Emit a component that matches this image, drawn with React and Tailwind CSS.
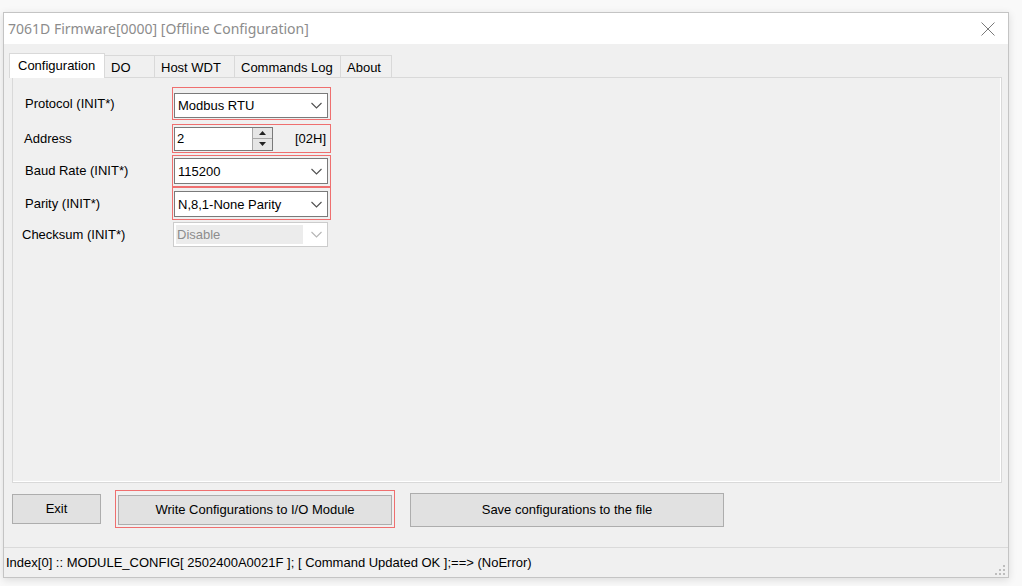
import React from "react";

const Chevron = ({ color = "#505050" }) => (
  <svg width="11" height="7" viewBox="0 0 11 7" fill="none">
    <polyline points="0.5,1 5.5,6 10.5,1" stroke={color} strokeWidth="1.1" />
  </svg>
);

// red highlight drawn round the edited settings
const Framed = ({ className, children }) => (
  <div className={`border border-[#ef6f6f] ${className}`}>{children}</div>
);

const ComboBox = ({ value, className = "h-[25px]" }) => (
  <div className={`flex items-center justify-between bg-white border border-[#7a7a7a] pl-[3px] pr-[5px] ${className}`}>
    <span className="text-[13px] leading-none text-black">{value}</span>
    <Chevron />
  </div>
);

const Spinner = () => (
  <div className="flex flex-col w-[20px] h-full border-l border-[#a8a8a8] bg-[#e6e6e6]">
    <div className="flex-1 flex items-center justify-center border-b border-[#a8a8a8]">
      <svg width="7" height="4" viewBox="0 0 7 4">
        <polygon points="0,4 3.5,0 7,4" fill="#222" />
      </svg>
    </div>
    <div className="flex-1 flex items-center justify-center">
      <svg width="7" height="4" viewBox="0 0 7 4">
        <polygon points="0,0 3.5,4 7,0" fill="#222" />
      </svg>
    </div>
  </div>
);

const tabs = [
  { name: "Configuration", w: "w-[96px]", active: true },
  { name: "DO", w: "w-[50px]" },
  { name: "Host WDT", w: "w-[80px]" },
  { name: "Commands Log", w: "w-[106px]" },
  { name: "About", w: "w-[51px]" },
];

const Button = ({ children, className }) => (
  <div className={`flex items-center justify-center bg-[#e1e1e1] border border-[#adadad] text-[13px] text-black ${className}`}>
    {children}
  </div>
);

export default function App() {
  return (
    <div className="w-[1022px] h-[586px] bg-[#f9f9f9] pl-[3px] pt-[12px] font-['Liberation_Sans',Arial,sans-serif] overflow-hidden">
      <div className="w-[1006px] h-[566px] flex flex-col border border-[#c4c4c4] shadow-[0_2px_8px_rgba(0,0,0,0.12)]">
        {/* title bar */}
        <div className="h-[31px] shrink-0 bg-white flex items-center justify-between pl-[4px] pr-[13px]">
          <span className="font-['Noto_Sans',sans-serif] text-[14px] text-[#8c8c8c]">
            7061D Firmware[0000] [Offline Configuration]
          </span>
          <svg width="14" height="14" viewBox="0 0 14 14">
            <path d="M0.5 0.5 L13.5 13.5 M13.5 0.5 L0.5 13.5" stroke="#7a7a7a" strokeWidth="1" />
          </svg>
        </div>

        <div className="flex-1 flex flex-col bg-[#f0f0f0]">
          {/* tab strip */}
          <div className="flex items-end h-[25px] mt-[8px] ml-[5px]">
            {tabs.map((t) =>
              t.active ? (
                <div
                  key={t.name}
                  className={`${t.w} h-[25px] bg-white border border-b-0 border-[#d9d9d9] pl-[8px] pt-[2px] text-[13px] text-black relative z-10 -mb-px`}
                >
                  {t.name}
                </div>
              ) : (
                <div
                  key={t.name}
                  className={`${t.w} h-[22px] bg-[#f0f0f0] border border-l-0 border-b-0 border-[#d9d9d9] pl-[6px] pt-[2px] text-[13px] text-black`}
                >
                  {t.name}
                </div>
              )
            )}
          </div>

          {/* tab page */}
          <div className="ml-[8px] w-[990px] h-[406px] border border-[#d9d9d9] shadow-[inset_-1px_-1px_0_#ffffff] pl-[12px] pt-[9px]">
            <div className="flex items-center h-[33px]">
              <span className="w-[147px] text-[13px] text-black">Protocol (INIT*)</span>
              <Framed className="w-[159px] h-[33px] px-[1px] pt-[5px] pr-[2px]">
                <ComboBox value="Modbus RTU" />
              </Framed>
            </div>

            <div className="flex items-center h-[29px] mt-[4px]">
              <span className="w-[147px] -ml-[1px] text-[13px] text-black">Address</span>
              <Framed className="w-[159px] h-[29px] flex items-center pl-[1px] pr-[4px] ml-[1px]">
                <div className="flex items-stretch w-[99px] h-[24px] bg-white border border-[#7a7a7a]">
                  <span className="flex-1 pl-[2px] text-[13px] leading-[22px] text-black">2</span>
                  <Spinner />
                </div>
                <span className="ml-auto text-[13px] text-black">[02H]</span>
              </Framed>
            </div>

            <div className="flex items-center h-[32px] mt-[2px]">
              <span className="w-[147px] text-[13px] text-black">Baud Rate (INIT*)</span>
              <Framed className="w-[159px] h-[32px] px-[1px] pt-[2px] pr-[2px]">
                <ComboBox value="115200" className="h-[26px]" />
              </Framed>
            </div>

            <div className="flex items-center h-[33px]">
              <span className="w-[147px] text-[13px] text-black">Parity (INIT*)</span>
              <Framed className="w-[159px] h-[33px] px-[1px] pt-[3px] pr-[2px]">
                <ComboBox value="N,8,1-None Parity" className="h-[26px]" />
              </Framed>
            </div>

            <div className="flex items-center h-[25px] mt-[2px]">
              <span className="w-[148px] -ml-[3px] mr-[3px] text-[13px] text-black">Checksum (INIT*)</span>
              <div className="w-[155px] h-[25px] flex items-center justify-between bg-white border border-[#cccccc] p-[2px] pr-[5px]">
                <span className="w-[127px] h-full bg-[#ececec] pl-[1px] text-[13px] leading-[19px] text-[#8d8d8d]">
                  Disable
                </span>
                <Chevron color="#b5b5b5" />
              </div>
            </div>
          </div>

          {/* buttons */}
          <div className="flex items-center h-[44px] mt-[4px] pl-[8px]">
            <Button className="w-[89px] h-[30px]">Exit</Button>
            <Framed className="ml-[14px] w-[280px] h-[38px] px-[2px] pt-[4px] pb-[2px]">
              <Button className="w-full h-full">Write Configurations to I/O Module</Button>
            </Framed>
            <Button className="ml-[15px] w-[314px] h-[34px] mt-[2px]">Save configurations to the file</Button>
          </div>

          {/* status bar */}
          <div className="mt-auto h-[30px] border-t border-[#dadada] flex items-center justify-between pl-[2px] pr-[3px]">
            <span className="text-[13px] text-black">
              Index[0] :: MODULE_CONFIG[ 2502400A0021F ]; [ Command Updated OK ];==&gt; (NoError)
            </span>
            <svg width="10" height="10" viewBox="0 0 10 10" className="self-end mb-[2px]">
              {[
                [8, 0],
                [8, 4],
                [4, 4],
                [8, 8],
                [4, 8],
                [0, 8],
              ].map(([x, y]) => (
                <rect key={`${x}-${y}`} x={x} y={y} width="2" height="2" fill="#bdbdbd" />
              ))}
            </svg>
          </div>
        </div>
      </div>
    </div>
  );
}
